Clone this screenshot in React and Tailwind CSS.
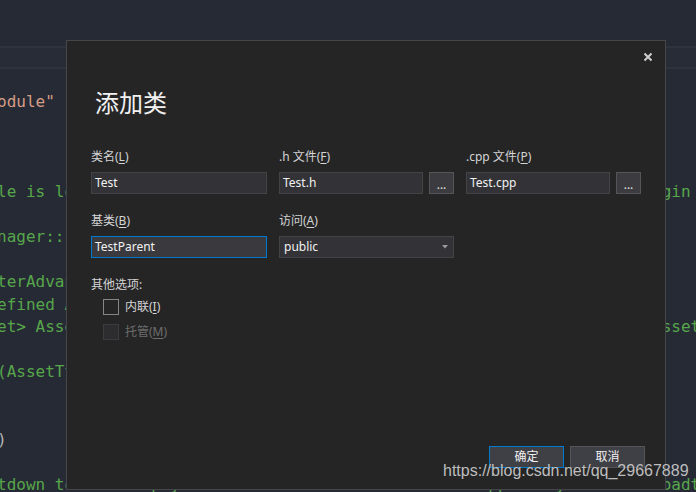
import React from 'react';

const pad = (left, right) => left.padEnd(69, ' ') + right;

const codeLines = [
  { text: 'odule"', color: 'text-[#d69d85]' },
  { text: '' },
  { text: '' },
  { text: '' },
  { text: pad('le is loaded into memory; the exact timing is specified', 'gin file per-module') },
  { text: '' },
  { text: 'nager::' },
  { text: '' },
  { text: 'terAdvancedAssetCategory(FName(TEXT("CustomAsset")),' },
  { text: 'efined Assets")));' },
  { text: pad('et> AssetTypeAction = MakeShareable(new FAssetTypeActions_Cu', 'sset(') },
  { text: '' },
  { text: '(AssetTypeAction);' },
  { text: '' },
  { text: '' },
  { text: ')', color: 'text-[#b4b4b4]' },
  { text: '' },
  { text: pad('tdown to clean up your module.  For modules that support dyn', 'oadt') },
];

const Key = ({ children }) => <span className="underline underline-offset-2">{children}</span>;

const Label = ({ children, className = '' }) => (
  <div className={`h-3 text-[12px] leading-none text-[#d4d4d4] whitespace-nowrap ${className}`}>{children}</div>
);

const TextBox = ({ value, focused = false, className = '' }) => (
  <div
    className={`h-[22px] flex items-center pl-[3px] text-[12px] text-[#f1f1f1] border ${
      focused ? 'border-[#007acc] bg-[#3a3a3e]' : 'border-[#434346] bg-[#333337]'
    } ${className}`}
  >
    {value}
  </div>
);

const BrowseButton = () => (
  <div className="w-[25px] h-[22px] flex items-center justify-center border border-[#555558] bg-[#3c3c40] text-[12px] text-[#e0e0e0] leading-none pt-1">
    ...
  </div>
);

const DialogButton = ({ children, primary = false }) => (
  <div
    className={`w-[75px] h-[22px] flex items-center justify-center text-[12px] text-[#f1f1f1] bg-[#3f3f46] border ${
      primary ? 'border-[#007acc]' : 'border-[#555558]'
    }`}
  >
    {children}
  </div>
);

export default function App() {
  return (
    <div className="relative w-[696px] h-[492px] overflow-hidden bg-[#262a35] font-['Noto_Sans','Noto_Sans_CJK_SC',sans-serif]">
      {/* editor behind the dialog */}
      <div className="h-[46px]" />
      <div className="h-[23px] border-y-2 border-[#2f333e] bg-[#282c37]" />
      <div className="pt-[22px] -ml-[3px] font-['DejaVu_Sans_Mono',monospace] text-[16px] leading-[22.5px] text-[#57a64a] whitespace-pre">
        {codeLines.map((line, i) => (
          <div key={i} className={`h-[22.5px] ${line.color || ''}`}>{line.text}</div>
        ))}
      </div>

      {/* add class dialog */}
      <div className="absolute left-[66px] top-[40px] w-[600px] h-[450px] border border-[#46464a] bg-[#252526] flex flex-col px-6">
        <button className="absolute right-[12px] top-[11px] w-[10px] h-[10px]">
          <svg width="10" height="10" viewBox="0 0 10 10">
            <path d="M1.5 1.5 L8.5 8.5 M8.5 1.5 L1.5 8.5" stroke="#cfcfcf" strokeWidth="2" />
          </svg>
        </button>

        <div className="mt-[50px] ml-[4px] h-6 text-[24px] leading-none text-[#f1f1f1]">添加类</div>

        <div className="mt-9 grid grid-cols-[176px_175px_175px] gap-x-3">
          <div>
            <Label>类名(<Key>L</Key>)</Label>
            <TextBox value="Test" className="mt-[9px]" />
          </div>
          <div>
            <Label>.h 文件(<Key>F</Key>)</Label>
            <div className="mt-[9px] flex gap-[6px]">
              <TextBox value="Test.h" className="w-[144px]" />
              <BrowseButton />
            </div>
          </div>
          <div>
            <Label>.cpp 文件(<Key>P</Key>)</Label>
            <div className="mt-[9px] flex gap-[6px]">
              <TextBox value="Test.cpp" className="w-[144px]" />
              <BrowseButton />
            </div>
          </div>

          <div className="mt-[21px]">
            <Label>基类(<Key>B</Key>)</Label>
            <TextBox value="TestParent" focused className="mt-[9px]" />
          </div>
          <div className="mt-[21px]">
            <Label>访问(<Key>A</Key>)</Label>
            <div className="mt-[9px] h-[22px] flex items-center justify-between pl-1 pr-[5px] border border-[#434346] bg-[#333337] text-[12px] text-[#f1f1f1]">
              <span>public</span>
              <svg width="6" height="4" viewBox="0 0 6 4">
                <path d="M0 0 L6 0 L3 3.5 Z" fill="#9a9a9a" />
              </svg>
            </div>
          </div>
        </div>

        <Label className="mt-[21px]">其他选项:</Label>
        <div className="mt-2 ml-3 flex flex-col gap-[9px]">
          <div className="flex items-center gap-[6px]">
            <div className="w-4 h-4 border border-[#858585]" />
            <span className="text-[12px] leading-none text-[#d4d4d4]">内联(<Key>I</Key>)</span>
          </div>
          <div className="flex items-center gap-[6px]">
            <div className="w-4 h-4 border border-[#3c3c3e] bg-[#2d2d30]" />
            <span className="text-[12px] leading-none text-[#6d6d6d]">托管(<Key>M</Key>)</span>
          </div>
        </div>

        <div className="mt-auto mb-[21px] -mr-[4px] flex justify-end gap-[6px]">
          <DialogButton primary>确定</DialogButton>
          <DialogButton>取消</DialogButton>
        </div>
      </div>

      {/* watermark */}
      <div className="absolute left-[443px] top-[463px] font-['Liberation_Sans',sans-serif] text-[16px] leading-none text-[#bdbdbd] whitespace-nowrap">
        https://blog.csdn.net/qq_29667889
      </div>
    </div>
  );
}
